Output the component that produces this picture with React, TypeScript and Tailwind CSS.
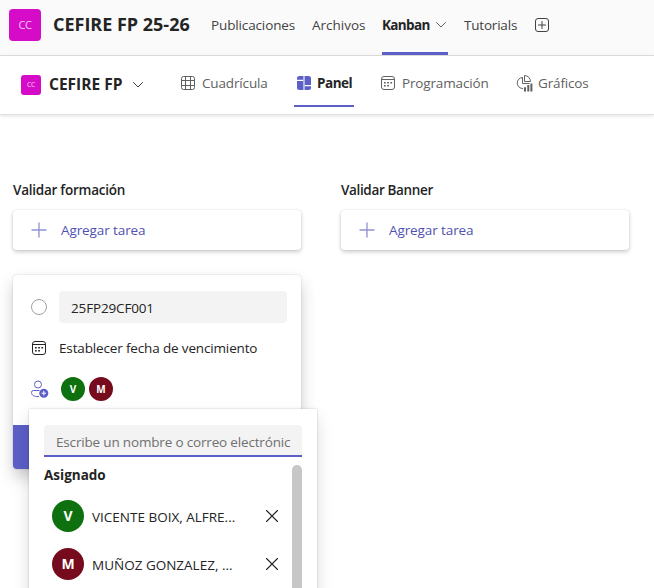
import React from 'react';

type IconProps = { className?: string };

const ChevronDown = ({ className = '' }: IconProps) => (
  <svg className={className} viewBox="0 0 12 8" fill="none" stroke="currentColor" strokeLinecap="round" strokeLinejoin="round">
    <path d="M1.5 1.5 6 6l4.500-4.500" />
  </svg>
);

const AddTab = () => (
  <svg className="h-4 w-4 shrink-0 text-[#424242]" viewBox="0 0 16 16" fill="none" stroke="currentColor">
    <rect x="1.500" y="1.500" width="13" height="13" rx="2.500" />
    <path d="M8 4.500v7M4.500 8h7" strokeLinecap="round" />
  </svg>
);

const GridIcon = () => (
  <svg className="h-4 w-4 shrink-0" viewBox="0 0 16 16" fill="none" stroke="currentColor">
    <rect x="1.500" y="1.500" width="13" height="13" rx="2" />
    <path d="M5.500 1.500v13M10.500 1.500v13M1.500 5.500h13M1.500 10.500h13" />
  </svg>
);

const BoardIcon = () => (
  <svg className="h-4 w-4 shrink-0" viewBox="0 0 16 16" fill="#5b5fc7">
    <path d="M3.500 1H7.300V4.800H1V3.500A2.500 2.500 0 0 1 3.500 1Z" />
    <path d="M1 6H7.300V15H3.500A2.500 2.500 0 0 1 1 12.500Z" />
    <path d="M8.700 1H12.500A2.500 2.500 0 0 1 15 3.500V10H8.700Z" />
    <path d="M8.700 11.200H15V12.500A2.500 2.500 0 0 1 12.500 15H8.700Z" />
    <path d="M7.300 1H8.700V15H7.300Z" fill="#a9abe0" />
  </svg>
);

const CalendarIcon = () => (
  <svg className="h-4 w-4 shrink-0" viewBox="0 0 16 16" fill="none" stroke="currentColor">
    <rect x="1.500" y="1.500" width="13" height="13" rx="2.500" />
    <path d="M1.500 4.500h13" />
    <path d="M4 7.750h1.700M7.200 7.750h1.700M10.400 7.750h1.700M4 10.750h1.700M7.200 10.750h1.700" strokeWidth="1.500" />
  </svg>
);

const ChartIcon = () => (
  <svg className="h-[18px] w-[17px] shrink-0" viewBox="0 0 17 18" fill="none" stroke="currentColor">
    <path d="M6.500 3.500A5.500 5.500 0 0 0 7 14.500M6.500 3.200V9.500H13.500" />
    <path d="M8.500 1.500V7.500H14.500A6 6 0 0 0 8.500 1.500Z" strokeLinejoin="round" />
    <path d="M9 17.500V13.300M12.300 17.500V11M15.400 17.500V9.500" strokeWidth="2" />
  </svg>
);

const PersonAdd = () => (
  <svg className="h-[18px] w-[18px] shrink-0" viewBox="0 0 18 18" fill="none" stroke="#5b5fc7">
    <circle cx="7" cy="4.500" r="3.500" />
    <path d="M8.500 10.500H2.500A2 2 0 0 0 .500 12.500C.500 15.200 3 16.600 7 16.600h1" />
    <circle cx="12.800" cy="13.200" r="4.500" fill="#5b5fc7" stroke="none" />
    <path d="M12.800 10.900v4.600M10.500 13.200h4.600" stroke="#fff" />
  </svg>
);

const CloseIcon = () => (
  <svg className="h-[14px] w-[14px] shrink-0" viewBox="0 0 14 14" fill="none" stroke="#242424" strokeWidth="1.100" strokeLinecap="round">
    <path d="m1.500 1.500 11 11M12.500 1.500l-11 11" />
  </svg>
);

const AddTask = () => (
  <div className="flex h-10 items-center rounded bg-white pl-[18px] text-[#4f52b2] shadow-[0_0_2px_rgba(0,0,0,0.1),0_2px_4px_rgba(0,0,0,0.2)]">
    <svg className="h-4 w-4" viewBox="0 0 16 16" stroke="#8f92d4" strokeWidth="1.300">
      <path d="M8 .500v15M.500 8h15" />
    </svg>
    <span className="ml-[14px] tracking-[-0.1px]">Agregar tarea</span>
  </div>
);

const Assignee = ({ initial, name, color }: { initial: string; name: string; color: string }) => (
  <div className="flex h-12 items-center pl-2">
    <span className={`flex h-8 w-8 items-center justify-center rounded-full text-[14px] font-bold text-white ${color}`}>{initial}</span>
    <span className="mt-px ml-2 w-[173px] whitespace-nowrap">{name}</span>
    <CloseIcon />
  </div>
);

export default function App() {
  return (
    <div className="h-[588px] w-[654px] overflow-hidden bg-white font-['Open_Sans',sans-serif] text-[13.5px] leading-5 whitespace-nowrap text-[#242424]">
      <header className="flex h-14 items-center border-b border-[#e0e0e0] bg-[#fafafa] pb-[5px] pl-[9px]">
        <div className="flex h-8 w-8 items-center justify-center rounded bg-[#d60bc8] text-[11px] tracking-[-0.5px] text-[#f8c9f4]">CC</div>
        <h1 className="ml-3 w-[158px] pb-[2px] text-[18px] font-bold -tracking-[0.01px]">CEFIRE FP 25-26</h1>
        <nav className="flex items-center text-[#424242]">
          <span className="w-[101px] tracking-[-0.13px]">Publicaciones</span>
          <span className="w-[70px]">Archivos</span>
          <div className="mr-4 -mb-[5px] flex h-[55px] w-[66px] items-center border-b-[3px] border-[#5b5fc7] pb-[2px]">
            <span className="w-[53px] font-bold tracking-[-0.65px] text-[#242424]">Kanban</span>
            <ChevronDown className="h-2 w-3 text-[#616161]" />
          </div>
          <span className="w-[70px] tracking-[-0.2px]">Tutorials</span>
          <AddTab />
        </nav>
      </header>

      <div className="flex h-[59px] items-center border-b border-[#e0e0e0] pl-[21px] shadow-[0_1px_4px_rgba(0,0,0,0.12)]">
        <div className="flex h-5 w-5 items-center justify-center rounded-[3px] bg-[#d60bc8] text-[7px] tracking-[-0.3px] text-[#f8c9f4]">CC</div>
        <h2 className="ml-2 w-[83px] pb-[2px] text-[15.500px] font-bold">CEFIRE FP</h2>
        <ChevronDown className="h-2 w-3 text-[#424242]" />
        <nav className="ml-9 flex items-center pb-[4px] text-[#616161]">
          <div className="flex w-[116px] items-center gap-[6px]"><GridIcon /><span className="tracking-[-0.15px]">Cuadrícula</span></div>
          <div className="flex w-[84px] items-center gap-[5px]">
            <BoardIcon /><span className="font-bold tracking-[-0.5px] text-[#242424]">Panel</span>
          </div>
          <div className="flex w-[136px] items-center gap-[6px]"><CalendarIcon /><span className="tracking-[-0.15px]">Programación</span></div>
          <div className="flex items-center gap-[5px]"><ChartIcon /><span className="tracking-[-0.15px]">Gráficos</span></div>
        </nav>
      </div>
      <div className="relative">
        <div className="absolute -top-[10px] left-[294px] h-0.5 w-[60px] bg-[#5b5fc7]" />
      </div>

      <main className="flex gap-10 pt-[65px] pl-[13px]">
        <section className="w-72">
          <h3 className="mb-[10px] font-semibold tracking-[-0.25px]">Validar formación</h3>
          <AddTask />
          <article className="relative mt-[25px] h-[194px] rounded bg-white shadow-[0_0_2px_rgba(0,0,0,0.2),0_8px_16px_rgba(0,0,0,0.2)]">
            <div className="flex items-center pt-4 pl-[18px]">
              <span className="h-4 w-4 rounded-full border border-[#a0a0a0]" />
              <div className="ml-3 flex h-8 w-[228px] items-center rounded bg-[#f3f3f3] pt-px pl-3 tracking-[-0.15px]">25FP29CF001</div>
            </div>
            <div className="mt-[15px] flex items-center pl-[18px]">
              <CalendarIcon /><span className="ml-3 tracking-[-0.15px]">Establecer fecha de vencimiento</span>
            </div>
            <div className="mt-[19px] flex items-center pl-[18px] text-[10px] font-bold text-white">
              <PersonAdd />
              <span className="ml-3 flex h-6 w-6 items-center justify-center rounded-full bg-[#0e700e]">V</span>
              <span className="ml-1 flex h-6 w-6 items-center justify-center rounded-full bg-[#750b1c]">M</span>
            </div>
            <div className="mt-6 h-11 rounded-b bg-[#5b5fc7]" />
            <div className="absolute top-[134px] left-4 h-[200px] w-72 bg-white pt-4 pl-[15px] shadow-[0_0_2px_rgba(0,0,0,0.2),0_8px_16px_rgba(0,0,0,0.14)]">
              <div className="h-8 w-[258px] rounded-t border-b-2 border-[#5b5fc7] bg-[#f3f3f3] px-3 pt-[7px] text-[#707070]">
                <div className="tracking-[-0.17px]">Escribe un nombre o correo electrónic</div>
              </div>
              <div className="flex w-[258px] pt-2">
                <div className="w-[248px]">
                  <h4 className="mb-[7px] font-bold">Asignado</h4>
                  <Assignee initial="V" name="VICENTE BOIX, ALFRE..." color="bg-[#0e700e]" />
                  <Assignee initial="M" name="MUÑOZ GONZALEZ, ..." color="bg-[#750b1c]" />
                </div>
                <div className="h-[150px] w-[10px] rounded-full bg-[#c7c7c7]" />
              </div>
            </div>
          </article>
        </section>
        <section className="w-72">
          <h3 className="mb-[10px] font-semibold tracking-[-0.35px]">Validar Banner</h3>
          <AddTask />
        </section>
      </main>
    </div>
  );
}
